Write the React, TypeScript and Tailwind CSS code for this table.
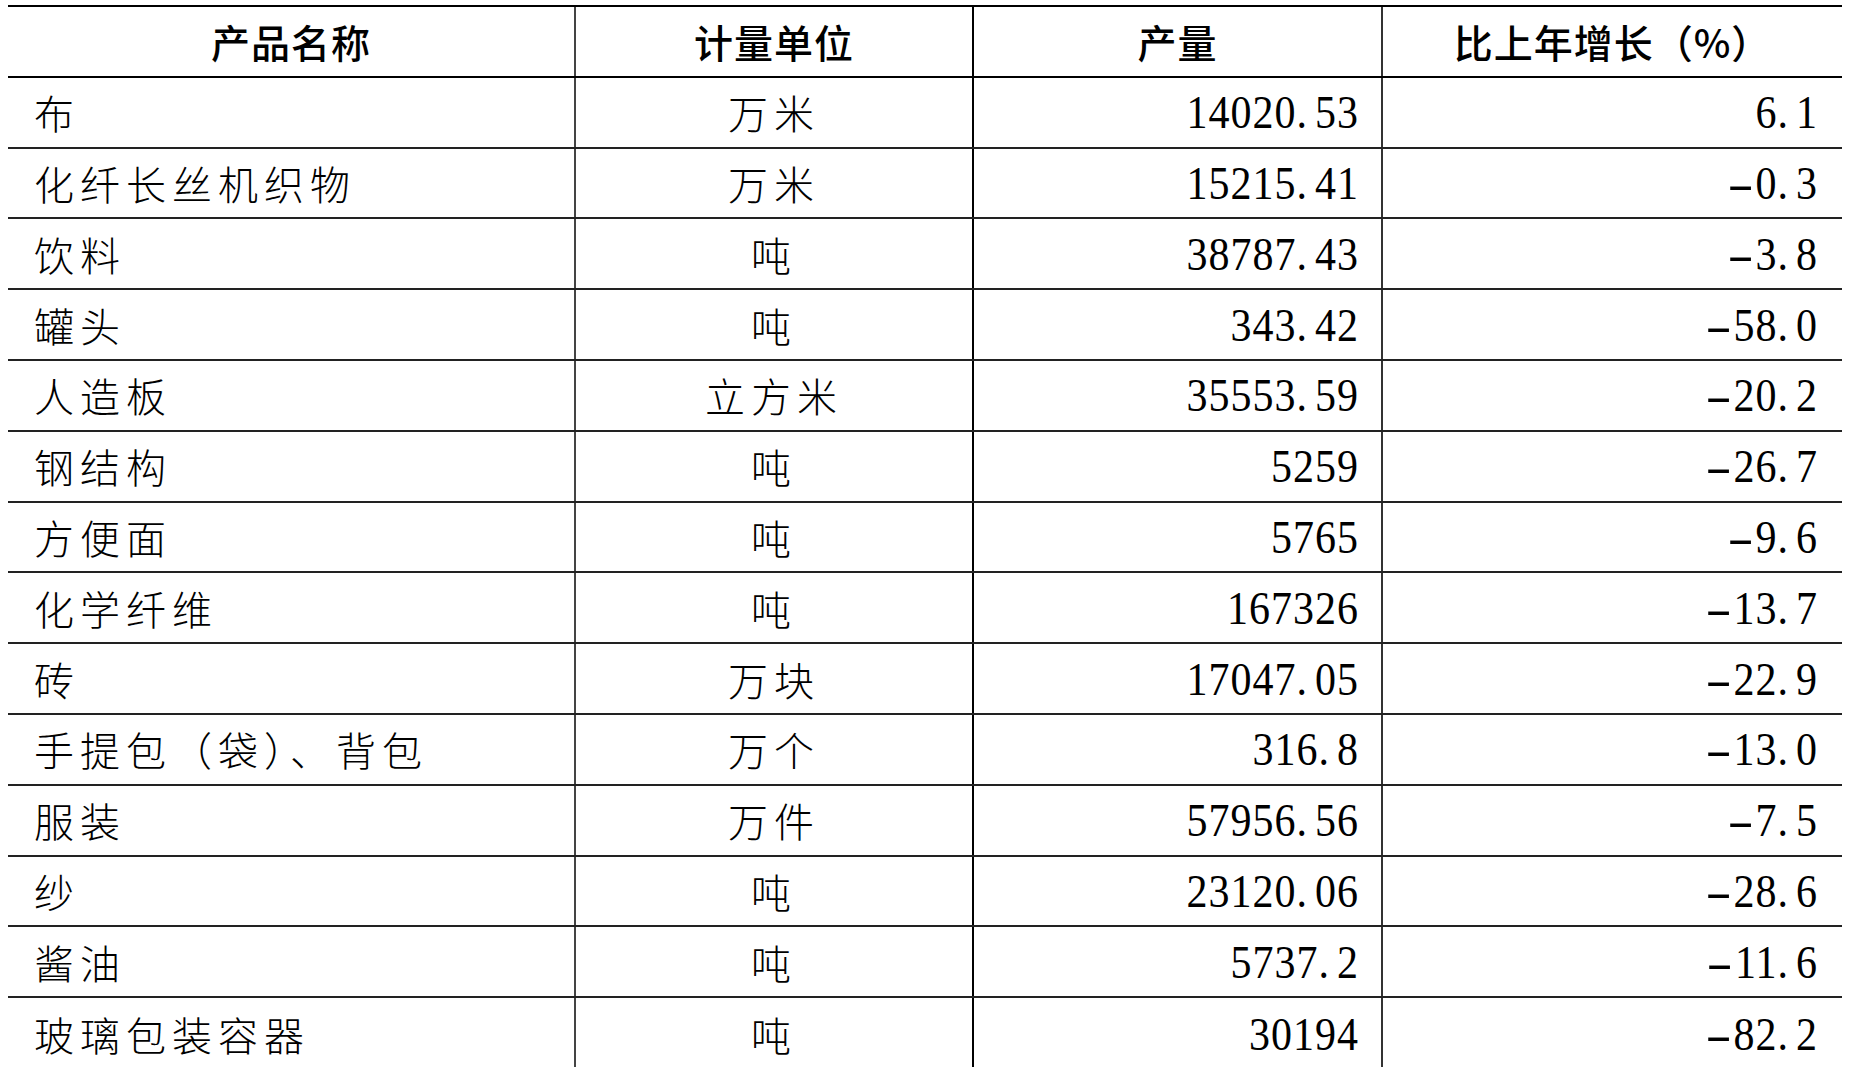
import React from "react";

const rows: [string, string, string, string][] = [
  ["布", "万米", "14020.53", "6.1"],
  ["化纤长丝机织物", "万米", "15215.41", "-0.3"],
  ["饮料", "吨", "38787.43", "-3.8"],
  ["罐头", "吨", "343.42", "-58.0"],
  ["人造板", "立方米", "35553.59", "-20.2"],
  ["钢结构", "吨", "5259", "-26.7"],
  ["方便面", "吨", "5765", "-9.6"],
  ["化学纤维", "吨", "167326", "-13.7"],
  ["砖", "万块", "17047.05", "-22.9"],
  ["手提包（袋）、背包", "万个", "316.8", "-13.0"],
  ["服装", "万件", "57956.56", "-7.5"],
  ["纱", "吨", "23120.06", "-28.6"],
  ["酱油", "吨", "5737.2", "-11.6"],
  ["玻璃包装容器", "吨", "30194", "-82.2"],
];

const cjk = "font-['Noto_Sans_CJK_SC',sans-serif]";
const num = "font-['Liberation_Serif','Noto_Sans_CJK_SC',serif]";

function Num({ v }: { v: string }) {
  const neg = v.startsWith("-");
  const body = neg ? v.slice(1) : v;
  const [a, b] = body.split(".");
  return (
    <span className="inline-block scale-y-[1.12] leading-none">
      {neg && <span className="inline-block scale-x-[1.9] mr-[7px]">-</span>}
      {a}
      {b !== undefined && (
        <>
          <span className="mr-[7px]">.</span>
          {b}
        </>
      )}
    </span>
  );
}

export default function App() {
  return (
    <div className="w-[1853px] h-[1067px] overflow-hidden bg-white text-black">
      <div className="ml-[8px] mt-[5px] w-[1834px] border-t-2 border-black">
        <div className={`grid grid-cols-[568px_398px_409px_459px] h-[70.8px] border-b-2 border-black ${cjk} font-medium text-[39px] tracking-[1px]`}>
          <div className="flex items-center justify-center border-r-2 border-[#444]">产品名称</div>
          <div className="flex items-center justify-center border-r-2 border-black">计量单位</div>
          <div className="flex items-center justify-center border-r-2 border-[#333]">产量</div>
          <div className="flex items-center justify-center">比上年增长（%）</div>
        </div>
        {rows.map((r, i) => (
          <div
            key={i}
            className={`grid grid-cols-[568px_398px_409px_459px] h-[70.8px] ${i === rows.length - 1 ? "" : "border-b-2 border-[#222]"}`}
          >
            <div className={`flex items-center pl-[26px] border-r-2 border-[#444] ${cjk} font-light text-[40px] tracking-[6px]`}>
              {r[0]}
            </div>
            <div className={`flex items-center justify-center border-r-2 border-black ${cjk} font-light text-[40px] tracking-[6px]`}>
              {r[1]}
            </div>
            <div className={`flex items-center justify-end pr-[22px] border-r-2 border-[#333] ${num} text-[42px] tracking-[1px]`}>
              <Num v={r[2]} />
            </div>
            <div className={`flex items-center justify-end pr-[24px] ${num} text-[42px] tracking-[1px]`}>
              <Num v={r[3]} />
            </div>
          </div>
        ))}
      </div>
    </div>
  );
}
